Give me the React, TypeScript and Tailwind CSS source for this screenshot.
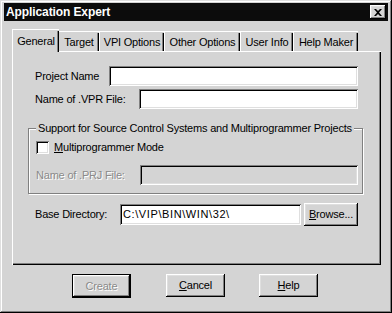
import React from "react";

const raised =
  "shadow-[inset_-1px_-1px_0_#000,inset_1px_1px_0_#fff,inset_-2px_-2px_0_#808080,inset_2px_2px_0_#dfdfdf]";
const sunken =
  "shadow-[inset_1px_1px_0_#808080,inset_-1px_-1px_0_#fff,inset_2px_2px_0_#000,inset_-2px_-2px_0_#dfdfdf]";

function Tab({ label, w, active }: { label: string; w: number; active?: boolean }) {
  return (
    <div
      style={{ width: w }}
      className={
        "relative flex items-start justify-center border-l border-t border-white border-r-0 " +
        (active
          ? "h-[23px] -mb-[1px] z-10 bg-[#d4d4d4] pt-[3px] -mx-[1px] px-0"
          : "h-[20px] bg-[#d4d4d4] pt-[2px] mt-[2px]")
      }
    >
      <span className="whitespace-nowrap">{label}</span>
      <div className="absolute right-0 top-[1px] bottom-0 w-[2px] border-r border-black bg-[#808080]" />
    </div>
  );
}

function Button({
  children,
  w,
  disabled,
  isDefault,
}: {
  children: React.ReactNode;
  w: number;
  disabled?: boolean;
  isDefault?: boolean;
}) {
  if (isDefault) {
    return (
      <div style={{ width: w }} className="h-[24px] border border-black">
        <div
          className={
            "h-full w-full flex items-center justify-center " +
            raised +
            (disabled ? " text-[#8a8a8a] [text-shadow:1px_1px_0_#fff]" : "")
          }
        >
          {children}
        </div>
      </div>
    );
  }
  return (
    <div
      style={{ width: w }}
      className={"h-[23px] flex items-center justify-center " + raised}
    >
      {children}
    </div>
  );
}

export default function App() {
  return (
    <div
      className="w-[392px] h-[313px] bg-[#d4d4d4] relative text-[11px] tracking-[-0.2px] text-black shadow-[inset_-1px_-1px_0_#000,inset_1px_1px_0_#dfdfdf,inset_-2px_-2px_0_#808080,inset_2px_2px_0_#fff]"
      style={{ fontFamily: '"Liberation Sans", Arial, sans-serif' }}
    >
      <div className="flex flex-col h-full px-[4px] pt-[3px]">
        {/* Title bar */}
        <div className="h-[18px] bg-[#0c0c0c] flex items-center justify-between pl-[2px] pr-[2px]">
          <span className="text-white font-bold text-[12px] tracking-[-0.1px] leading-none">Application Expert</span>
          <div className={"w-[16px] h-[14px] bg-[#d4d4d4] flex items-center justify-center " + raised}>
            <svg width="8" height="7" viewBox="0 0 8 7">
              <path d="M0 0h2l2 2 2-2h2L5 3.5 8 7H6L4 5 2 7H0l3-3.5z" fill="#000" />
            </svg>
          </div>
        </div>

        {/* Tabs */}
        <div className="flex ml-[9px] mt-[8px] h-[23px] items-start relative z-10">
          <Tab label="General" w={47} active />
          <Tab label="Target" w={41} />
          <Tab label="VPI Options" w={65} />
          <Tab label="Other Options" w={76} />
          <Tab label="User Info" w={53} />
          <Tab label="Help Maker" w={65} />
        </div>

        {/* Panel */}
        <div
          className={
            "ml-[8px] w-[369px] h-[214px] -mt-[1px] flex flex-col pl-[22px] pr-[23px] pt-[14px] border-l border-t border-white shadow-[inset_-1px_-1px_0_#000,inset_-2px_-2px_0_#808080]"
          }
        >
          <div className="flex items-center h-[20px]">
            <span className="w-[74px]">Project Name</span>
            <div className={"flex-1 h-[20px] bg-white " + sunken} />
          </div>
          <div className="flex items-center h-[20px] mt-[3px]">
            <span className="w-[104px]">Name of .VPR File:</span>
            <div className={"flex-1 h-[20px] bg-white " + sunken} />
          </div>

          {/* Group box */}
          <div className="relative -ml-[7px] -mr-[5px] mt-[19px] h-[66px] border border-[#808080] shadow-[1px_1px_0_#fff,inset_1px_1px_0_#fff]">
            <span className="absolute -top-[8px] left-[7px] bg-[#d4d4d4] px-[2px] leading-[14px] whitespace-nowrap">
              Support for Source Control Systems and Multiprogrammer Projects
            </span>
            <div className="flex items-center mt-[12px] ml-[7px] h-[13px]">
              <div className={"w-[13px] h-[13px] bg-white " + sunken} />
              <span className="ml-[5px]">
                <span className="underline underline-offset-[1px]">M</span>ultiprogrammer Mode
              </span>
            </div>
            <div className="flex items-center mt-[11px] ml-[7px] mr-[4px] h-[20px]">
              <span className="w-[104px] text-[#8a8a8a] [text-shadow:1px_1px_0_#fff]">Name of .PRJ File:</span>
              <div className={"flex-1 h-[20px] bg-[#d4d4d4] " + sunken} />
            </div>
          </div>

          <div className="flex items-center h-[21px] mt-[10px]">
            <span className="w-[85px]">Base Directory:</span>
            <div className={"w-[181px] h-[21px] bg-white pl-[3px] flex items-center tracking-[0.6px] " + sunken}>
              C:\VIP\BIN\WIN\32\
            </div>
            <div className="ml-[3px]">
              <Button w={54}>
                <span>
                  <span className="underline underline-offset-[1px]">B</span>rowse...
                </span>
              </Button>
            </div>
          </div>
        </div>

        {/* Buttons */}
        <div className="flex mt-[9px] ml-[68px]">
          <Button w={59} disabled isDefault>
            Create
          </Button>
          <div className="ml-[35px]">
            <Button w={59}>
              <span>
                <span className="underline underline-offset-[1px]">C</span>ancel
              </span>
            </Button>
          </div>
          <div className="ml-[34px]">
            <Button w={59}>
              <span>
                <span className="underline underline-offset-[1px]">H</span>elp
              </span>
            </Button>
          </div>
        </div>
      </div>
    </div>
  );
}
